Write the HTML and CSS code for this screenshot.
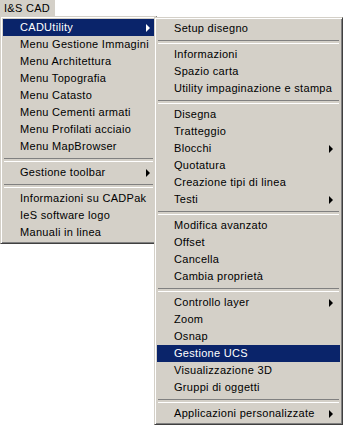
FILE: index.html
```html
<!DOCTYPE html>
<html lang="it">
<head>
    <meta charset="UTF-8">
    <title>I&amp;S CAD</title>
    <link rel="stylesheet" href="styles.css">
</head>
<body>
    <div class="menubar">
        <span class="menubar-title">I&amp;S CAD</span>
    </div>
    <div class="menus">
        <ul class="menu menu-main">
            <li class="item active has-sub">CADUtility</li>
            <li class="item">Menu Gestione Immagini</li>
            <li class="item">Menu Architettura</li>
            <li class="item">Menu Topografia</li>
            <li class="item">Menu Catasto</li>
            <li class="item">Menu Cementi armati</li>
            <li class="item">Menu Profilati acciaio</li>
            <li class="item">Menu MapBrowser</li>
            <li class="sep"></li>
            <li class="item has-sub">Gestione toolbar</li>
            <li class="sep"></li>
            <li class="item">Informazioni su CADPak</li>
            <li class="item">IeS software logo</li>
            <li class="item">Manuali in linea</li>
        </ul>
        <ul class="menu menu-sub">
            <li class="item">Setup disegno</li>
            <li class="sep"></li>
            <li class="item">Informazioni</li>
            <li class="item">Spazio carta</li>
            <li class="item">Utility impaginazione e stampa</li>
            <li class="sep"></li>
            <li class="item">Disegna</li>
            <li class="item">Tratteggio</li>
            <li class="item has-sub">Blocchi</li>
            <li class="item">Quotatura</li>
            <li class="item">Creazione tipi di linea</li>
            <li class="item has-sub">Testi</li>
            <li class="sep"></li>
            <li class="item">Modifica avanzato</li>
            <li class="item">Offset</li>
            <li class="item">Cancella</li>
            <li class="item">Cambia proprietà</li>
            <li class="sep"></li>
            <li class="item has-sub">Controllo layer</li>
            <li class="item">Zoom</li>
            <li class="item">Osnap</li>
            <li class="item active">Gestione UCS</li>
            <li class="item">Visualizzazione 3D</li>
            <li class="item">Gruppi di oggetti</li>
            <li class="sep"></li>
            <li class="item has-sub">Applicazioni personalizzate</li>
        </ul>
    </div>
</body>
</html>
```

FILE: styles.css
```css
* {
    margin: 0;
    padding: 0;
    box-sizing: border-box;
}
body {
    font-family: 'Liberation Sans', Arial, sans-serif;
    font-size: 11px;
    letter-spacing: 0.3px;
    background-color: #fff;
    color: #000;
}
.menubar {
    height: 16px;
}
.menubar-title {
    display: inline-block;
    width: 55px;
    height: 16px;
    line-height: 16px;
    padding-left: 4px;
    background-color: #d4d0c8;
}
.menus {
    display: flex;
    align-items: flex-start;
}
.menu {
    list-style: none;
    background-color: #d4d0c8;
    border: 1px solid;
    border-color: #d4d0c8 #404040 #404040 #d4d0c8;
    box-shadow: inset 1px 1px 0 #fff, inset -1px -1px 0 #808080;
    padding: 2px;
}
.menu-main {
    width: 157px;
}
.menu-sub {
    width: 189px;
    margin-left: -3px;
    margin-top: 1px;
}
.item {
    position: relative;
    height: 17px;
    line-height: 17px;
    padding-left: 17px;
    white-space: nowrap;
}
.item.active {
    background-color: #0a246a;
    color: #fff;
}
.has-sub::after {
    content: '';
    position: absolute;
    top: 5px;
    right: 4px;
    width: 0;
    height: 0;
    border-top: 4px solid transparent;
    border-bottom: 4px solid transparent;
    border-left: 4px solid #000;
}
.menu-sub .has-sub::after {
    right: 7px;
}
.item.active.has-sub::after {
    border-left-color: #fff;
}
.sep {
    height: 9px;
    padding: 3px 1px 0;
}
.sep::before {
    content: '';
    display: block;
    height: 2px;
    border-top: 1px solid #808080;
    border-bottom: 1px solid #fff;
}
```
